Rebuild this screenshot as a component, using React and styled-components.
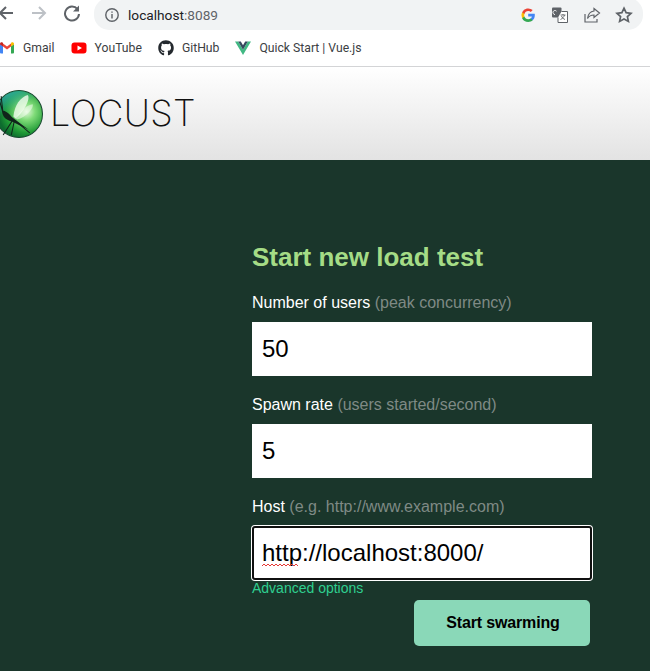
import React from 'react';
import styled, { createGlobalStyle } from 'styled-components';
import { FaGithub } from 'react-icons/fa';

const Global = createGlobalStyle`
  html, body { margin: 0; padding: 0; background: #1a362b; }
  body { font-family: "Liberation Sans", Arial, sans-serif; }
`;

const Page = styled.div`
  width: 650px;
  height: 671px;
  overflow: hidden;
  display: flex;
  flex-direction: column;
`;

const Toolbar = styled.div`
  height: 32px;
  background: #fff;
  display: flex;
  align-items: flex-start;
`;

const NavIcon = styled.svg`
  width: 18px;
  height: 18px;
  margin: 4px 0 0 ${p => p.$left}px;
  flex: none;
`;

const Omnibox = styled.div`
  margin: -2px 0 0 13px;
  width: 549px;
  height: 32px;
  background: #f1f3f4;
  border-radius: 15px;
  display: flex;
  align-items: center;
  padding: 2px 10px 0 10px;
  box-sizing: border-box;
`;

const Url = styled.div`
  margin-left: 8px;
  font: 13.7px "Roboto", sans-serif;
  color: #202124;
  flex: 1;
  span { color: #5f6368; }
`;

const BoxIcon = styled.svg`
  width: 18px;
  height: 18px;
  margin-left: ${p => p.$left}px;
  flex: none;
`;

const InfoIcon = styled.svg`
  width: 16px;
  height: 16px;
  flex: none;
`;

const Bookmarks = styled.div`
  height: 35px;
  box-sizing: border-box;
  background: #fff;
  border-bottom: 1px solid #d3d4d6;
  display: flex;
  align-items: center;
  padding-bottom: 2px;
  margin-left: -1px;
`;

const Mark = styled.div`
  display: flex;
  align-items: center;
  gap: 8px;
  margin-right: 16px;
  font: 12.2px "Roboto", sans-serif;
  color: #3c4043;
  svg { width: 16px; height: 16px; flex: none; }
`;

const LogoBar = styled.div`
  height: 93px;
  box-sizing: border-box;
  background: linear-gradient(#ffffff, #e3e3e3);
  display: flex;
  align-items: center;
  overflow: hidden;
`;

const Globe = styled.svg`
  width: 48px;
  height: 48px;
  margin-left: -5px;
  flex: none;
`;

const Wordmark = styled.div`
  font-family: "Inter", sans-serif;
  font-weight: 200;
  font-size: 36px;
  letter-spacing: 0.4px;
  line-height: 47px;
  color: #111;
  margin-left: 7px;
`;

const Main = styled.div`
  flex: 1;
  background: #1a362b;
  padding: 82px 0 0 252px;
`;

const Form = styled.form`
  width: 340px;
  display: flex;
  flex-direction: column;
`;

const Title = styled.h2`
  margin: 0 0 21px;
  font-size: 26px;
  line-height: 30px;
  font-weight: bold;
  color: #a5dc86;
`;

const Label = styled.label`
  font-size: 16px;
  line-height: 20px;
  color: #fff;
  margin-bottom: 9px;
  small { font-size: 16px; color: #7f8a85; }
`;

const Field = styled.div`
  position: relative;
  height: 54px;
  margin-bottom: ${p => (p.$last ? 0 : 19)}px;
`;

const Input = styled.input`
  width: 100%;
  height: 100%;
  box-sizing: border-box;
  border: 0;
  outline: 0;
  padding: 0 10px;
  font: 24px "Liberation Sans", Arial, sans-serif;
  color: #000;
  background: #fff;
  border-radius: ${p => (p.$focused ? 3 : 0)}px;
  ${p => p.$focused && 'box-shadow: inset 0 0 0 2px #101010, 0 0 0 1px #fff;'}
`;

const Squiggle = styled.svg`
  position: absolute;
  left: 10px;
  top: 37px;
  width: 40px;
  height: 4px;
`;

const Advanced = styled.a`
  font-size: 14px;
  line-height: 16px;
  color: #2fcf90;
`;

const Submit = styled.button`
  align-self: flex-end;
  margin: 4px 2px 0 0;
  padding: 0 0 0 2px;
  width: 176px;
  height: 46px;
  border: 0;
  border-radius: 5px;
  background: #8ad8b8;
  color: #000;
  font: bold 16px "Liberation Sans", Arial, sans-serif;
  letter-spacing: -0.15px;
`;

const bookmarks = [
  {
    name: 'Gmail',
    icon: (
      <svg viewBox="0 0 16 16">
        <path d="M1 13.5V4l3 2.2v7.3H2a1 1 0 0 1-1-1z" fill="#4285f4" />
        <path d="M12 13.5V6.2L15 4v8.5a1 1 0 0 1-1 1z" fill="#34a853" />
        <path d="M4 6.5V3.4L8 6.4l4-3v3.1L8 9.5z" fill="#ea4335" />
        <path d="M1 4.5V3.7C1 2.4 2.5 1.7 3.5 2.5L4 3v3.5z" fill="#c5221f" />
        <path d="M12 6.5V3l.5-.5c1-.8 2.5-.1 2.5 1.2v.8z" fill="#fbbc04" />
      </svg>
    ),
  },
  {
    name: 'YouTube',
    icon: (
      <svg viewBox="0 0 16 16">
        <rect x="0.5" y="2.5" width="15" height="11" rx="3" fill="#f00" />
        <path d="M6.5 5.5v5L11 8z" fill="#fff" />
      </svg>
    ),
  },
  { name: 'GitHub', icon: <FaGithub color="#24292e" /> },
  {
    name: 'Quick Start | Vue.js',
    icon: (
      <svg viewBox="0 0 16 14">
        <path d="M0 0.5h3.2L8 8.7 12.8 0.5H16L8 14z" fill="#41b883" />
        <path d="M3.2 0.5h2.6L8 4.2l2.2-3.7h2.6L8 8.7z" fill="#35495e" />
      </svg>
    ),
  },
];

const Logo = () => (
  <Globe viewBox="0 0 47 47">
    <defs>
      <radialGradient id="orb" cx="0.66" cy="0.45" r="0.6">
        <stop offset="0" stopColor="#e4f8dc" />
        <stop offset="0.3" stopColor="#7fdb78" />
        <stop offset="0.75" stopColor="#1f9a35" />
        <stop offset="1" stopColor="#0d6b2e" />
      </radialGradient>
      <linearGradient id="sky" x1="0.1" y1="0" x2="0.5" y2="0.8">
        <stop offset="0" stopColor="#35b3b8" />
        <stop offset="0.55" stopColor="#35b3b8" stopOpacity="0" />
      </linearGradient>
    </defs>
    <circle cx="23.5" cy="23.5" r="23" fill="url(#orb)" stroke="#17482f" />
    <circle cx="23.5" cy="23.5" r="22.5" fill="url(#sky)" />
    <path d="M18 26 C19 15 25 7 32 5 C35 8 29 21 20 28z" fill="#f2fdee" opacity="0.8" />
    <path d="M20 28 C25 20 31 15 37 14 C38 18 31 26 22 29z" fill="#f2fdee" opacity="0.55" />
    <path d="M7 20 C10 20 14 23 17 27 L33 39 L17 31 C13 30 9 28 8 25z" fill="#10241a" />
    <path d="M8 24 L6 6 M8 23 L4 9 M19 30 L16 44 M22 32 L34 42 M17 30 L8 44" stroke="#10241a" strokeWidth="1" fill="none" />
  </Globe>
);

const field = [
  { label: 'Number of users', hint: '(peak concurrency)', value: '50' },
  { label: 'Spawn rate', hint: '(users started/second)', value: '5' },
  { label: 'Host', hint: '(e.g. http://www.example.com)', value: 'http://localhost:8000/', focused: true },
];

export default function App() {
  return (
    <Page>
      <Global />
      <Toolbar>
        <NavIcon $left={-3} viewBox="0 0 18 18">
          <path d="M16 9H3M9 3L3 9l6 6" fill="none" stroke="#5f6368" strokeWidth="2" />
        </NavIcon>
        <NavIcon $left={15} viewBox="0 0 18 18">
          <path d="M2 9h13M9 3l6 6-6 6" fill="none" stroke="#bdc1c6" strokeWidth="2" />
        </NavIcon>
        <NavIcon $left={15} viewBox="0 0 18 18">
          <path d="M14.5 5.2A7 7 0 1 0 16 10" fill="none" stroke="#5f6368" strokeWidth="2" />
          <path d="M16 1.5v6h-6z" fill="#5f6368" />
        </NavIcon>
        <Omnibox>
          <InfoIcon viewBox="0 0 18 18">
            <circle cx="9" cy="9" r="7" fill="none" stroke="#5f6368" strokeWidth="1.6" />
            <path d="M9 8v5M9 5v1.6" stroke="#5f6368" strokeWidth="1.6" />
          </InfoIcon>
          <Url>localhost<span>:8089</span></Url>
          <BoxIcon $left={0} viewBox="0 0 18 18">
            <path d="M15.8 9.2c0-.5 0-1-.1-1.4H9.2v2.7h3.7a3.2 3.2 0 0 1-1.4 2.1v1.7h2.2c1.3-1.2 2.1-3 2.1-5.1z" fill="#4285f4" />
            <path d="M9.2 16c1.9 0 3.4-.6 4.5-1.7l-2.2-1.7c-.6.4-1.4.7-2.3.7-1.8 0-3.3-1.2-3.8-2.8H3.1v1.7A6.8 6.8 0 0 0 9.2 16z" fill="#34a853" />
            <path d="M5.4 10.5a4 4 0 0 1 0-2.6V6.2H3.1a6.8 6.8 0 0 0 0 6z" fill="#fbbc05" />
            <path d="M9.2 5c1 0 1.9.3 2.6 1l1.9-1.9A6.8 6.8 0 0 0 3.1 6.2l2.3 1.7C5.9 6.3 7.4 5 9.2 5z" fill="#ea4335" />
          </BoxIcon>
          <BoxIcon $left={14} viewBox="0 0 18 18">
            <rect x="1" y="1.5" width="9.5" height="10" rx="1" fill="#5f6368" />
            <path d="M10.5 5.5H16.5V16.5H7V11.5" fill="#fff" stroke="#5f6368" strokeWidth="1" />
            <path d="M4 8.5a2 2 0 1 1 1.5-3.3" fill="none" stroke="#fff" strokeWidth="1" />
            <path d="M9.5 9h5M12 8v1M13.5 9c-.5 2-2 3.5-4 4.5M10.5 10c.5 1.5 2 3 3.5 3.5" fill="none" stroke="#5f6368" strokeWidth="0.9" />
          </BoxIcon>
          <BoxIcon $left={14} viewBox="0 0 18 18">
            <path d="M2 8v8h12v-3" fill="none" stroke="#5f6368" strokeWidth="1.2" />
            <path d="M11 2.5l5.5 4.5-5.5 4.5V9C8 9 6 10 4.5 12.5 5 8.5 7.5 5.5 11 5z" fill="none" stroke="#5f6368" strokeWidth="1.2" />
          </BoxIcon>
          <BoxIcon $left={14} viewBox="0 0 18 18">
            <path d="M9 2.2l2.1 4.5 4.9.6-3.6 3.3 1 4.8L9 13l-4.4 2.4 1-4.8L2 7.3l4.900-.6z" fill="none" stroke="#5f6368" strokeWidth="1.7" />
          </BoxIcon>
        </Omnibox>
      </Toolbar>
      <Bookmarks>
        {bookmarks.map(b => (
          <Mark key={b.name}>
            {b.icon}
            {b.name}
          </Mark>
        ))}
      </Bookmarks>
      <LogoBar>
        <Logo />
        <Wordmark>LOCUST</Wordmark>
      </LogoBar>
      <Main>
        <Form>
          <Title>Start new load test</Title>
          {field.map((f, i) => (
            <React.Fragment key={f.label}>
              <Label>
                {f.label} <small>{f.hint}</small>
              </Label>
              <Field $last={i === field.length - 1}>
                <Input defaultValue={f.value} $focused={f.focused} spellCheck={false} />
                {f.focused && (
                  <Squiggle viewBox="0 0 40 4">
                    <path d="M0 3l2-2 2 2 2-2 2 2 2-2 2 2 2-2 2 2 2-2 2 2 2-2 2 2 2-2 2 2 2-2 2 2 2-2 2 2" fill="none" stroke="#e53935" strokeWidth="1" />
                  </Squiggle>
                )}
              </Field>
            </React.Fragment>
          ))}
          <Advanced>Advanced options</Advanced>
          <Submit type="button">Start swarming</Submit>
        </Form>
      </Main>
    </Page>
  );
}
